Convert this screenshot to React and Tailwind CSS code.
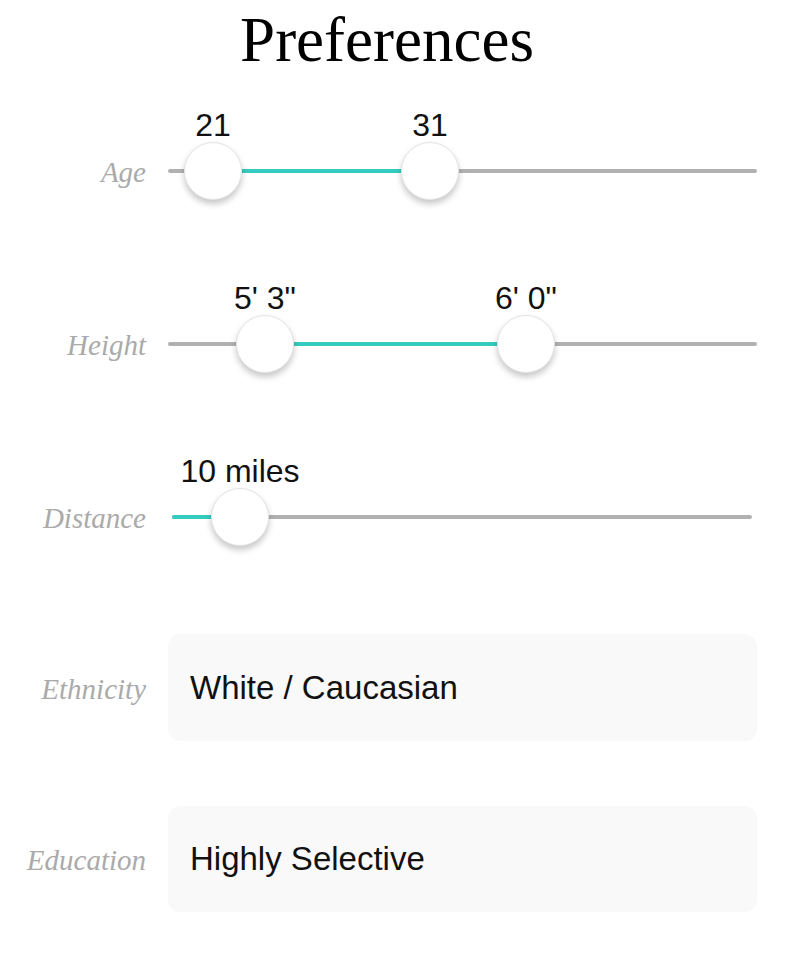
import React from 'react';

const sliders = [
  { label: 'Age', start: 168, width: 589, thumbs: [{ x: 45, text: '21' }, { x: 262, text: '31' }] },
  { label: 'Height', start: 168, width: 589, thumbs: [{ x: 97, text: "5' 3\"" }, { x: 358, text: "6' 0\"" }] },
  { label: 'Distance', start: 172, width: 580, thumbs: [{ x: 68, text: '10 miles' }] },
];

const fields = [
  { label: 'Ethnicity', value: 'White / Caucasian', h: 'h-[107px]' },
  { label: 'Education', value: 'Highly Selective', h: 'h-[106px]' },
];

const serif = "font-['Liberation_Serif',Times,serif]";
const sans = "font-['Liberation_Sans',Arial,sans-serif]";

const RowLabel = ({ children }) => (
  <div className={`w-[146px] shrink-0 text-right italic text-[29px] pt-[4px] text-[#aaaaaa] ${serif}`}>{children}</div>
);

const Slider = ({ s }) => {
  const xs = s.thumbs.map((t) => t.x);
  const from = xs.length > 1 ? xs[0] : 0;
  const to = xs[xs.length - 1];
  return (
    <div className="flex items-center h-[58px]">
      <RowLabel>{s.label}</RowLabel>
      <div className="relative h-[58px] flex items-center" style={{ marginLeft: s.start - 146, width: s.width }}>
        <div className="w-full h-[4px] rounded-full bg-[#b1b1b1]" />
        <div className="absolute h-[4px] rounded-full bg-[#33ccbe]" style={{ left: from, width: to - from }} />
        {s.thumbs.map((t) => (
          <div key={t.text} className="absolute top-0" style={{ left: t.x - 29 }}>
            <div className={`absolute bottom-full left-1/2 -translate-x-1/2 mb-[1px] whitespace-nowrap leading-none text-[32px] text-[#111] ${sans}`}>
              {t.text}
            </div>
            <div className="w-[58px] h-[58px] rounded-full bg-white border border-[#e4e4e4] shadow-[0_4px_6px_rgba(0,0,0,0.22)]" />
          </div>
        ))}
      </div>
    </div>
  );
}

export default function App() {
  return (
    <div className="w-[788px] min-h-[974px] bg-white pt-[9px]">
      <h1 className={`text-center pr-[14px] leading-none text-[63px] text-black ${serif}`}>Preferences</h1>
      <div className="mt-[70px] flex flex-col gap-[115px]">
        {sliders.map((s) => (
          <Slider key={s.label} s={s} />
        ))}
      </div>
      <div className="mt-[88px] flex flex-col gap-[65px]">
        {fields.map((f) => (
          <div key={f.label} className="flex items-center">
            <RowLabel>{f.label}</RowLabel>
            <div className={`ml-[22px] w-[589px] ${f.h} rounded-[12px] bg-[#f9f9f9] flex items-center pl-[22px] text-[33px] text-[#111] ${sans}`}>
              {f.value}
            </div>
          </div>
        ))}
      </div>
    </div>
  );
}
